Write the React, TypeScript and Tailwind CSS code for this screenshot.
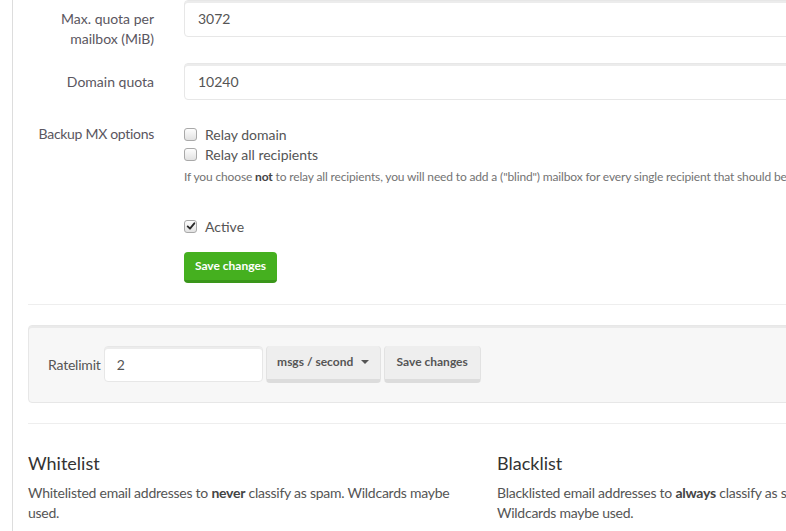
function Checkbox({ checked = false }: { checked?: boolean }) {
  return (
    <span className="relative inline-flex h-[13px] w-[13px] shrink-0 items-center justify-center rounded-[3px] border border-[#a9a9a9] bg-gradient-to-b from-[#fdfdfd] to-[#e2e2e2]">
      {checked && (
        <svg viewBox="0 0 12 12" className="h-[10px] w-[10px]">
          <path d="M2 6.5 L4.8 9.2 L10 2.8" fill="none" stroke="#2b2b2b" strokeWidth="2.2" strokeLinecap="round" strokeLinejoin="round" />
        </svg>
      )}
    </span>
  );
}

function TextInput({ value, className = "" }: { value: string; className?: string }) {
  return (
    <div
      className={
        "flex items-center rounded-[4px] border border-[#e7e7e7] bg-white pl-[12px] text-[14px] text-[#555] shadow-[inset_0_2px_0_rgba(0,0,0,0.075)] " +
        className
      }
    >
      {value}
    </div>
  );
}

export default function App() {
  const font = { fontFamily: 'Lato, "Open Sans", sans-serif' };
  return (
    <div className="h-[531px] w-[786px] overflow-hidden bg-white text-[14px] text-[#555]" style={font}>
      <div className="ml-[12px] h-full w-[1100px] border-l border-[#dddddd] pl-[15px]">
        {/* Row 1 */}
        <div className="flex gap-[30px]">
          <div className="w-[126px] pt-[9px] text-right leading-[20px] text-[#5a5660]">
            Max. quota per
            <br />
            mailbox (MiB)
          </div>
          <TextInput value="3072" className="h-[37px] flex-1 pl-[13px]" />
        </div>

        {/* Row 2 */}
        <div className="mt-[14px] flex gap-[30px]">
          <div className="w-[126px] pt-[9px] text-right leading-[20px] text-[#5a5660]">Domain quota</div>
          <TextInput value="10240" className="h-[37px] flex-1 pl-[13px]" />
        </div>

        {/* Row 3 */}
        <div className="mt-[24px] flex gap-[30px]">
          <div className="w-[126px] whitespace-nowrap text-right leading-[20px] tracking-[-0.3px] text-[#5a5660]">Backup MX options</div>
          <div className="flex-1">
            <label className="flex h-[20px] items-center gap-[8px]">
              <Checkbox />
              <span>Relay domain</span>
            </label>
            <label className="flex h-[20px] items-center gap-[8px]">
              <Checkbox />
              <span>Relay all recipients</span>
            </label>
            <p className="mt-[4px] whitespace-nowrap text-[12px] leading-[18px] tracking-[-0.15px] text-[#737373]">
              If you choose <b className="font-bold text-[#444]">not</b> to relay all recipients, you will need to add a ("blind") mailbox for every single recipient that should be relayed.
            </p>
            <label className="mt-[30px] flex h-[20px] items-center gap-[8px]">
              <Checkbox checked />
              <span>Active</span>
            </label>
            <button className="mt-[16px] h-[31px] w-[93px] rounded-[4px] border-b-[3px] border-[#3a961a] bg-[#45b01f] text-[12px] font-bold text-white">
              Save changes
            </button>
          </div>
        </div>

        <hr className="mt-[21px] border-t border-[#eeeeee]" />

        {/* Ratelimit well */}
        <div className="mt-[20px] flex h-[78px] items-center rounded-[4px] border border-[#e7e7e7] bg-[#f7f7f7] pl-[19px] shadow-[inset_0_2px_0_rgba(0,0,0,0.05)]">
          <span className="mr-[3px] tracking-[-0.2px]">Ratelimit</span>
          <TextInput value="2" className="h-[36px] w-[159px]" />
          <button className="ml-[3px] flex h-[37px] w-[115px] items-center justify-center gap-[8px] rounded-[4px] border-x border-b-[4px] border-[#e2e2e2] border-b-[#dcdcdc] bg-[#eeeeee] text-[12px] font-bold text-[#555]">
            <span>msgs / second</span>
            <span className="h-0 w-0 border-x-[4px] border-t-[4px] border-x-transparent border-t-[#555]" />
          </button>
          <button className="ml-[3px] h-[37px] w-[97px] rounded-[4px] border-x border-b-[4px] border-[#e2e2e2] border-b-[#dcdcdc] bg-[#eeeeee] text-[12px] font-bold text-[#555]">
            Save changes
          </button>
        </div>

        <hr className="mt-[20px] border-t border-[#eeeeee]" />

        {/* Lists */}
        <div className="mt-[29px] flex">
          <div className="w-[469px] pr-[39px]">
            <h4 className="text-[18px] leading-[20px] text-[#333]">Whitelist</h4>
            <p className="mt-[10px] leading-[20px] tracking-[-0.25px]">
              Whitelisted email addresses to <b className="font-bold text-[#444]">never</b> classify as spam. Wildcards maybe used.
            </p>
          </div>
          <div className="w-[469px] pr-[39px]">
            <h4 className="text-[18px] leading-[20px] text-[#333]">Blacklist</h4>
            <p className="mt-[10px] leading-[20px] tracking-[-0.25px]">
              Blacklisted email addresses to <b className="font-bold text-[#444]">always</b> classify as spam and reject. Wildcards maybe used.
            </p>
          </div>
        </div>
      </div>
    </div>
  );
}
